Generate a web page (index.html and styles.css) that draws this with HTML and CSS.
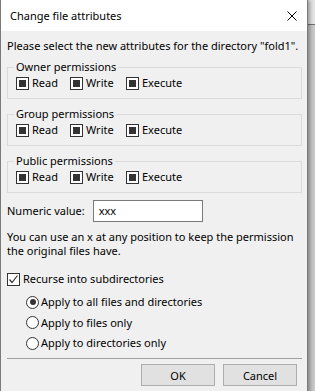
FILE: index.html
```html
<!DOCTYPE html>
<html lang="en">
<head>
    <meta charset="UTF-8">
    <meta name="viewport" content="width=device-width, initial-scale=1.0">
    <title>Change file attributes</title>
    <link rel="stylesheet" href="styles.css">
</head>
<body>
    <div class="window">
        <div class="titlebar">
            <span class="title">Change file attributes</span>
            <svg class="close" width="10" height="10" viewBox="0 0 10 10">
                <path d="M0.5 0.5 L9.5 9.5 M9.5 0.5 L0.5 9.5" stroke="#000" stroke-width="1" fill="none"/>
            </svg>
        </div>

        <div class="content">
            <p class="intro">Please select the new attributes for the directory "fold1".</p>

            <fieldset class="group">
                <legend>Owner permissions</legend>
                <div class="perms">
                    <label class="perm"><span class="box mixed"></span>Read</label>
                    <label class="perm"><span class="box mixed"></span>Write</label>
                    <label class="perm"><span class="box mixed"></span>Execute</label>
                </div>
            </fieldset>

            <fieldset class="group">
                <legend>Group permissions</legend>
                <div class="perms">
                    <label class="perm"><span class="box mixed"></span>Read</label>
                    <label class="perm"><span class="box mixed"></span>Write</label>
                    <label class="perm"><span class="box mixed"></span>Execute</label>
                </div>
            </fieldset>

            <fieldset class="group">
                <legend>Public permissions</legend>
                <div class="perms">
                    <label class="perm"><span class="box mixed"></span>Read</label>
                    <label class="perm"><span class="box mixed"></span>Write</label>
                    <label class="perm"><span class="box mixed"></span>Execute</label>
                </div>
            </fieldset>

            <div class="numeric">
                <span class="numeric-label">Numeric value:</span>
                <div class="textbox">xxx</div>
            </div>

            <p class="hint">You can use an x at any position to keep the permission the original files have.</p>

            <label class="recurse">
                <span class="box checked">
                    <svg width="11" height="11" viewBox="0 0 11 11">
                        <path d="M1.5 5.5 L4 8.5 L9.5 1.5" stroke="#333" stroke-width="1.2" fill="none"/>
                    </svg>
                </span>
                Recurse into subdirectories
            </label>

            <div class="radios">
                <label class="radio"><span class="dot selected"></span>Apply to all files and directories</label>
                <label class="radio"><span class="dot"></span>Apply to files only</label>
                <label class="radio"><span class="dot"></span>Apply to directories only</label>
            </div>

            <div class="separator"></div>

            <div class="buttons">
                <button class="btn">OK</button>
                <button class="btn">Cancel</button>
            </div>
        </div>
    </div>
</body>
</html>
```

FILE: styles.css
```css
* {
    margin: 0;
    padding: 0;
    box-sizing: border-box;
}

body {
    font-family: "Noto Sans", sans-serif;
    font-size: 11px;
    line-height: 16px;
    color: #000;
    background: linear-gradient(to bottom, #e4e4e4 0, #e4e4e4 24px, #6f6f6f 24px, #6f6f6f 25px, #c9c9c9 25px);
    width: 315px;
    height: 391px;
    overflow: hidden;
}

.window {
    width: 308px;
    height: 400px;
    background-color: #f0f0f0;
    border-left: 1px solid #7a7a7a;
    border-right: 1px solid #7a7a7a;
    box-shadow: 2px 0 4px rgba(0, 0, 0, 0.35);
}

.titlebar {
    height: 31px;
    background-color: #fff;
    display: flex;
    align-items: center;
    justify-content: space-between;
    padding: 0 10px 0 9px;
}

.close {
    display: block;
    margin-top: 1px;
}

.content {
    padding: 7px 5px 0 6px;
    display: flex;
    flex-direction: column;
}

.intro {
    margin-bottom: 5px;
    white-space: nowrap;
}

.group {
    border: 1px solid #dadada;
    padding: 0 0 6px 8px;
    margin-bottom: 7px;
    height: 40px;
}

.group legend {
    margin-left: -2px;
    padding: 0 2px;
    line-height: 16px;
}

.perms {
    display: flex;
}

.perm {
    display: flex;
    align-items: center;
    width: 54px;
}

.perm:nth-child(2) {
    width: 56px;
}

.box {
    width: 13px;
    height: 13px;
    border: 1px solid #333;
    background-color: #fff;
    margin-right: 3px;
    position: relative;
    flex-shrink: 0;
}

.box.mixed::after {
    content: "";
    position: absolute;
    top: 2px;
    left: 2px;
    width: 7px;
    height: 7px;
    background-color: #333;
}

.box.checked svg {
    display: block;
}

.numeric {
    display: flex;
    align-items: center;
    gap: 8px;
}

.textbox {
    width: 110px;
    height: 22px;
    border: 1px solid #7a7a7a;
    background-color: #fff;
    padding: 2px 5px;
    line-height: 16px;
}

.hint {
    margin-top: 8px;
    line-height: 14px;
}

.recurse {
    display: flex;
    align-items: center;
    margin-top: 13px;
}

.radios {
    display: flex;
    flex-direction: column;
    gap: 4.5px;
    margin-top: 7px;
    padding-left: 19px;
}

.radio {
    display: flex;
    align-items: center;
}

.dot {
    width: 13px;
    height: 13px;
    border: 1px solid #333;
    border-radius: 50%;
    background-color: #fff;
    margin-right: 2px;
    position: relative;
}

.dot.selected::after {
    content: "";
    position: absolute;
    top: 2.5px;
    left: 2.5px;
    width: 6px;
    height: 6px;
    border-radius: 50%;
    background-color: #333;
}

.separator {
    height: 1px;
    background-color: #a0a0a0;
    margin-top: 7px;
}

.buttons {
    display: flex;
    justify-content: flex-end;
    gap: 8px;
    margin-top: 5px;
    padding-right: 5px;
}

.btn {
    width: 74px;
    height: 22px;
    background-color: #e1e1e1;
    border: 1px solid #adadad;
    font-family: inherit;
    font-size: 11px;
    color: #000;
}
```
